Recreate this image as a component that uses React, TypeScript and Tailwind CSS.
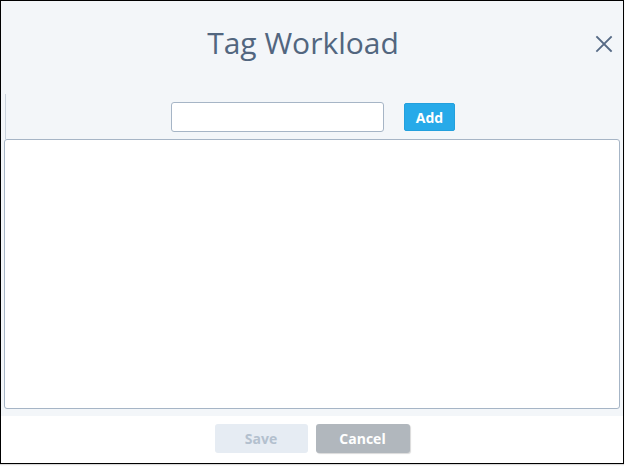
import React from "react";

export default function App() {
  return (
    <div className="w-[626px] h-[467px] bg-white" style={{ fontFamily: '"Open Sans", "Liberation Sans", sans-serif' }}>
      <div className="w-[624px] h-[464px] border border-black flex flex-col bg-white shadow-[0_1px_1px_rgba(0,0,0,0.15)]">
        {/* Header */}
        <div className="h-[93px] bg-[#f3f6f9] relative flex items-start justify-center pt-[22px] pr-[18px] shrink-0">
          <h1 className="text-[30px] leading-[40px] text-[#52667f] font-normal">Tag Workload</h1>
          <button className="absolute right-[9px] top-[33px] w-[20px] h-[20px] flex items-center justify-center text-[#566a85]">
            <svg width="18" height="18" viewBox="0 0 18 18" fill="none" stroke="currentColor" strokeWidth="1.8" strokeLinecap="square">
              <path d="M2 2 L16 16 M16 2 L2 16" />
            </svg>
          </button>
        </div>
        {/* Body */}
        <div className="bg-[#f3f6f9] pl-[4px] pr-[3px] pb-[7px] shrink-0">
          <div className="border-l border-[#c9d2dc]">
            <div className="flex justify-center items-center gap-[20px] pt-[8px] pb-[7px]">
              <input className="w-[213px] h-[30px] bg-white border border-[#a6b5c6] rounded-[3px] outline-none px-2 text-sm" />
              <button className="w-[51px] h-[28px] bg-[#27aae9] text-white font-bold text-[14px] rounded-[2px] border border-[#23a0dd]">Add</button>
            </div>
          </div>
          <div className="-ml-px h-[270px] bg-white border border-[#a6b5c6] rounded-[3px]"></div>
        </div>
        {/* Footer */}
        <div className="flex-1 bg-white flex justify-center items-start gap-[8px] pt-[8px]">
          <button className="w-[93px] h-[29px] bg-[#e6ecf3] text-[#b3c0ce] font-bold text-[14px] rounded-[3px]">Save</button>
          <button className="w-[94px] h-[29px] bg-[#b1b7bd] text-white font-bold text-[14px] rounded-[3px] shadow-[1px_1px_1px_rgba(0,0,0,0.15)]">Cancel</button>
        </div>
      </div>
    </div>
  );
}
